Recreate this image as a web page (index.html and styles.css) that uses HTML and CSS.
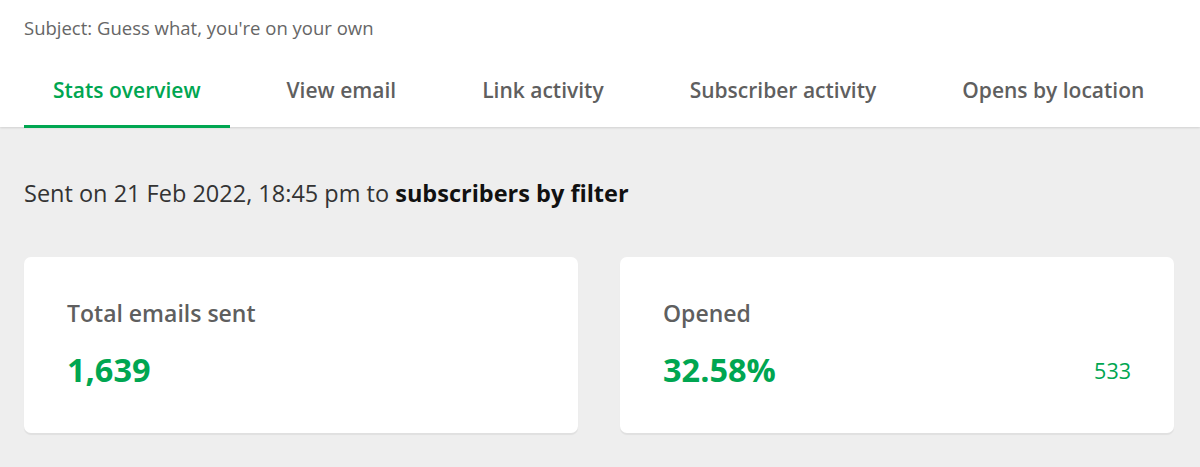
FILE: index.html
```html
<!DOCTYPE html>
<html lang="en">
<head>
<meta charset="utf-8">
<title>Campaign report</title>
<link rel="stylesheet" href="styles.css">
</head>
<body>
<header class="header">
  <div class="subject">Subject: Guess what, you're on your own</div>
  <nav class="tabs">
    <a class="tab active">Stats overview</a>
    <a class="tab">View email</a>
    <a class="tab">Link activity</a>
    <a class="tab">Subscriber activity</a>
    <a class="tab">Opens by location</a>
  </nav>
</header>
<main class="main">
  <p class="sent">Sent on 21 Feb 2022, 18:45 pm to <strong>subscribers by filter</strong></p>
  <section class="cards">
    <div class="card">
      <div class="card-title">Total emails sent</div>
      <div class="card-row">
        <span class="card-value">1,639</span>
      </div>
    </div>
    <div class="card">
      <div class="card-title">Opened</div>
      <div class="card-row">
        <span class="card-value">32.58%</span>
        <span class="card-count">533</span>
      </div>
    </div>
  </section>
</main>
</body>
</html>
```

FILE: styles.css
```css
* { box-sizing: border-box; }
html, body { margin: 0; padding: 0; }
body {
  background: #eeeeee;
  font-family: "Open Sans", "Liberation Sans", sans-serif;
  color: #222;
  height: 467px;
  overflow: hidden;
}
.header {
  background: #fff;
  height: 127px;
  padding: 0 24px;
  box-shadow: 0 1px 2px rgba(0,0,0,0.12);
  position: relative;
  z-index: 1;
}
.subject {
  padding-top: 17px;
  font-size: 18.5px;
  line-height: 22px;
  color: #666;
}
.tabs {
  display: flex;
  gap: 28px;
  margin-top: 31px;
}
.tab {
  padding: 0 29px;
  height: 58px;
  line-height: 40px;
  font-size: 21px;
  font-weight: 600;
  color: #5f5f5f;
  border-bottom: 3px solid transparent;
  white-space: nowrap;
}
.tab.active {
  color: #00a651;
  border-bottom-color: #00a651;
}
.main {
  padding: 0 26px 0 24px;
}
.sent {
  margin: 0;
  padding-top: 52px;
  font-size: 23.5px;
  line-height: 28px;
  color: #333;
}
.sent strong { color: #111; font-weight: 700; }
.cards {
  display: grid;
  grid-template-columns: 1fr 1fr;
  gap: 42px;
  margin-top: 50px;
}
.card {
  background: #fff;
  border-radius: 7px;
  height: 176px;
  padding: 43px 43px 0;
  box-shadow: 0 2px 1px rgba(0,0,0,0.06);
}
.card-title {
  font-size: 23px;
  font-weight: 600;
  line-height: 26px;
  color: #5f5f5f;
}
.card-row {
  display: flex;
  justify-content: space-between;
  align-items: center;
  margin-top: 24px;
}
.card-value {
  font-size: 32.5px;
  font-weight: 700;
  line-height: 40px;
  color: #00a651;
}
.card-count {
  font-size: 21.5px;
  color: #00a651;
}
```
